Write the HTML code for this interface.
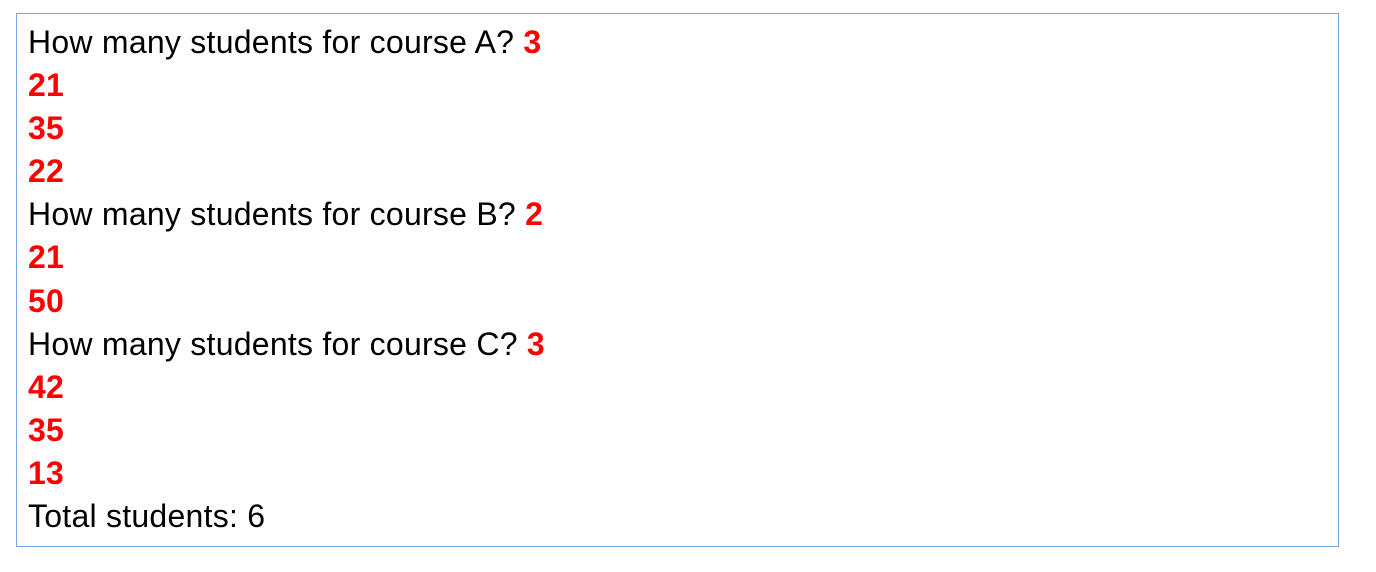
<!DOCTYPE html>
<html><head><meta charset="utf-8"><style>
html,body{margin:0;padding:0;background:#fff;width:1376px;height:572px;overflow:hidden}
.box{position:absolute;left:16px;top:13px;width:1321px;height:532px;border:1px solid #7aa6da;}
.t{position:absolute;left:11px;top:7px;font-family:"Liberation Sans",sans-serif;font-size:32px;line-height:43.1px;color:#000;letter-spacing:0.25px}
b{color:#ff0000}
</style></head><body>
<div class="box"><div class="t">
How many students for course A? <b>3</b><br>
<b>21</b><br>
<b>35</b><br>
<b>22</b><br>
How many students for course B? <b>2</b><br>
<b>21</b><br>
<b>50</b><br>
How many students for course C? <b>3</b><br>
<b>42</b><br>
<b>35</b><br>
<b>13</b><br>
Total students: 6
</div></div>
</body></html>
